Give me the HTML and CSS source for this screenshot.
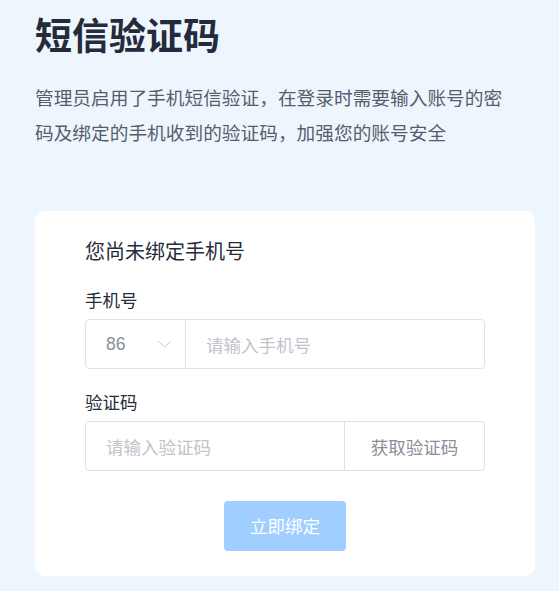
FILE: index.html
```html
<!DOCTYPE html>
<html lang="zh-CN">
<head>
  <meta charset="utf-8">
  <meta name="viewport" content="width=device-width, initial-scale=1" />
  <title>短信验证码</title>
  <link rel="stylesheet" href="styles.css">
</head>
<body>
  <div id="container">
    <div id="title">
      <h1>短信验证码</h1>
      <p>管理员启用了手机短信验证，在登录时需要输入账号的密码及绑定的手机收到的验证码，加强您的账号安全</p>
    </div>

    <div class="card">
      <p class="hint">您尚未绑定手机号</p>

      <div class="field">
        <label>手机号</label>
        <div class="group">
          <div class="select">
            <span>86</span>
            <svg class="chevron" width="13" height="7" viewBox="0 0 13 7"><path d="M0.5 0.5 L6.5 6 L12.5 0.5" fill="none" stroke="#c0c4cc" stroke-width="1"/></svg>
          </div>
          <input class="input" type="text" placeholder="请输入手机号">
        </div>
      </div>

      <div class="field">
        <label>验证码</label>
        <div class="group">
          <input class="input" type="text" placeholder="请输入验证码">
          <button class="send" type="button">获取验证码</button>
        </div>
      </div>

      <div class="actions">
        <button class="submit" type="button" disabled>立即绑定</button>
      </div>
    </div>
  </div>
</body>
</html>
```

FILE: styles.css
```css
body {
  font-family: "Noto Sans CJK SC", "Noto Sans", sans-serif;
  margin: 0;
  padding: 10px 24px 15px 35px;
  background: #eef6fd;
  color: #252b3a;
}
#container {
  width: 500px;
}
#title h1 {
  margin: 0;
  font-size: 37px;
  line-height: 48px;
  font-weight: 700;
  color: #252b3a;
}
#title p {
  margin: 21px 0 0;
  max-width: 480px;
  font-size: 18.7px;
  line-height: 35px;
  color: #575d6c;
}
.card {
  margin-top: 62px;
  background: #fff;
  border-radius: 10px;
  padding: 27px 50px 25px;
}
.hint {
  margin: 0 0 23px;
  font-size: 20px;
  line-height: 26px;
}
.field {
  margin-bottom: 20px;
}
.field label {
  display: block;
  font-size: 17.5px;
  line-height: 26px;
  margin-bottom: 6px;
}
.group {
  display: flex;
  height: 50px;
  border: 1px solid #dfe1e6;
  border-radius: 4px;
  box-sizing: border-box;
}
.select {
  width: 100px;
  display: flex;
  align-items: center;
  justify-content: space-between;
  padding: 0 14px 0 20px;
  box-sizing: border-box;
  border-right: 1px solid #dfe1e6;
  font-family: "Liberation Sans", Arial, sans-serif;
  font-size: 17.5px;
  color: #8a8e99;
}
.input {
  flex: 1;
  min-width: 0;
  border: 0;
  outline: 0;
  background: transparent;
  padding: 0 20px;
  font-family: inherit;
  font-size: 17.5px;
  color: #252b3a;
}
.input::placeholder {
  color: #c0c4cc;
}
.send {
  width: 140px;
  border: 0;
  border-left: 1px solid #dfe1e6;
  background: transparent;
  font-family: inherit;
  font-size: 17.5px;
  color: #8a8e99;
  padding: 0;
}
.actions {
  display: flex;
  justify-content: center;
  padding-top: 10px;
}
.submit {
  width: 122px;
  height: 50px;
  border: 0;
  border-radius: 4px;
  background: #a0cfff;
  color: #fff;
  font-family: inherit;
  font-size: 17.5px;
  line-height: 1;
}
```
